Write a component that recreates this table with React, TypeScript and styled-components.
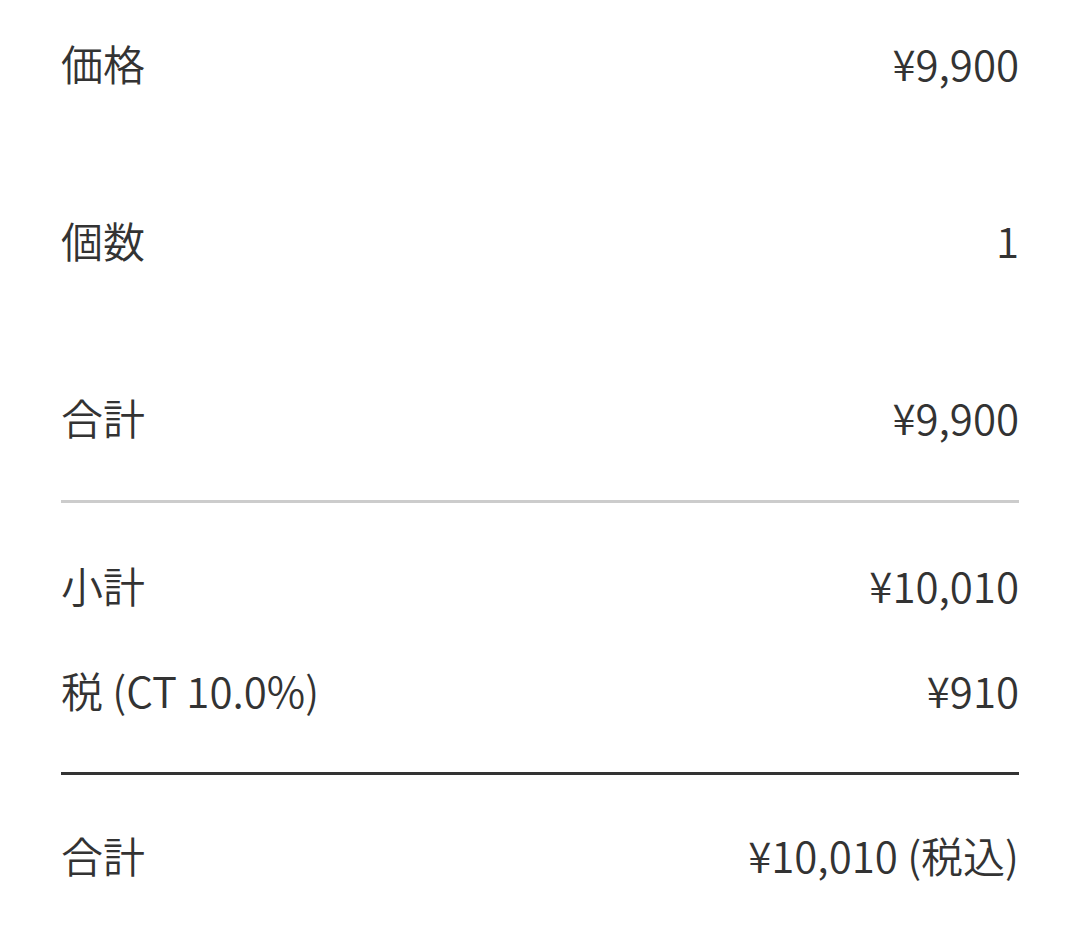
import styled, { createGlobalStyle } from 'styled-components'

// 注文内容のサマリー。行データだけ配列で持って、区切り線はセクションの境目で引く。
const GlobalStyle = createGlobalStyle`
  html, body {
    margin: 0;
    background: #ffffff;
  }
  body {
    font-family: "Noto Sans CJK JP", "Noto Sans", sans-serif;
    color: #333333;
  }
`

type Line = { label: string; value: string }

const items: Line[] = [
  { label: '価格', value: '¥9,900' },
  { label: '個数', value: '1' },
  { label: '合計', value: '¥9,900' },
]

const breakdown: Line[] = [
  { label: '小計', value: '¥10,010' },
  { label: '税 (CT 10.0%)', value: '¥910' },
]

export default function App() {
  return (
    <>
      <GlobalStyle />
      <Summary>
        <Section $gap={113} $top={31} $bottom={51}>
          {items.map((l, i) => (
            <Row key={i}>
              <Label>{l.label}</Label>
              <Value>{l.value}</Value>
            </Row>
          ))}
        </Section>
        <Divider $strong={false} />
        <Section $gap={41} $top={50} $bottom={50}>
          {breakdown.map((l, i) => (
            <Row key={i}>
              <Label>{l.label}</Label>
              <Value>{l.value}</Value>
            </Row>
          ))}
        </Section>
        <Divider $strong />
        <Section $gap={0} $top={48} $bottom={40}>
          <Row>
            <Label>合計</Label>
            <Value>¥10,010 (税込)</Value>
          </Row>
        </Section>
      </Summary>
    </>
  )
}

const Summary = styled.div`
  padding: 0 61px;
  display: flex;
  flex-direction: column;
`

const Section = styled.div<{ $gap: number; $top: number; $bottom: number }>`
  display: flex;
  flex-direction: column;
  gap: ${({ $gap }) => $gap}px;
  padding: ${({ $top, $bottom }) => `${$top}px 0 ${$bottom}px`};
`

const Row = styled.div`
  display: flex;
  align-items: center;
  justify-content: space-between;
  font-size: 42px;
  font-weight: 350;
  line-height: 64px;
  height: 64px;
`

const Label = styled.span``

const Value = styled.span``

const Divider = styled.hr<{ $strong: boolean }>`
  margin: 0;
  border: 0;
  height: 3px;
  background: ${({ $strong }) => ($strong ? '#333333' : '#cccccc')};
`
